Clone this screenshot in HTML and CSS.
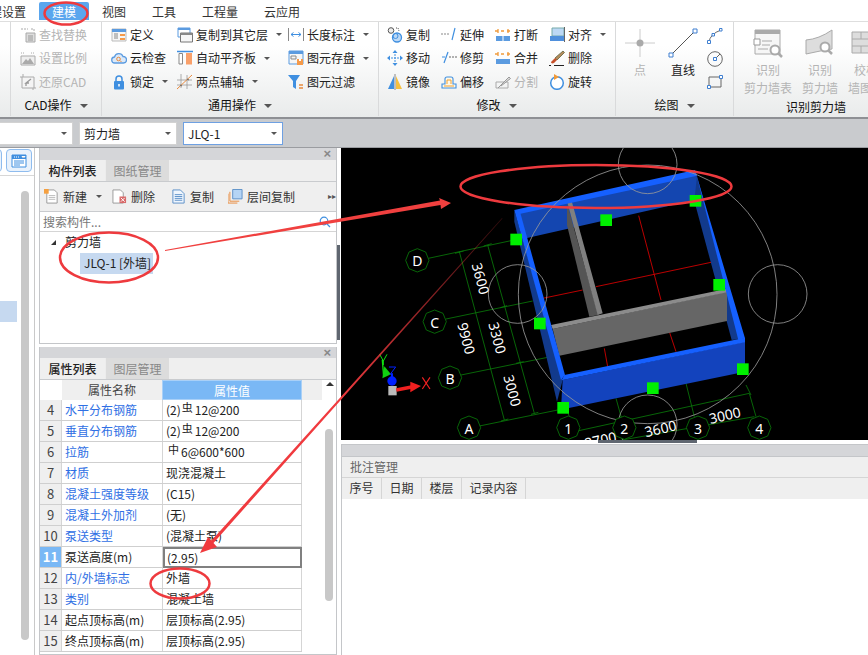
FILE: index.html
```html
<!DOCTYPE html>
<html lang="zh-CN">
<head>
<meta charset="utf-8">
<title>建模</title>
<link rel="stylesheet" href="styles.css">
</head>
<body>
<div class="app">
  <nav class="tabs">
    <span class="tab first">工程设置</span>
    <span class="tab active">建模</span>
    <span class="tab">视图</span>
    <span class="tab">工具</span>
    <span class="tab">工程量</span>
    <span class="tab">云应用</span>
  </nav>

  <section class="ribbon">
    <div class="group g-cad">
      <div class="grid">
        <div class="item off"><svg class="ic" viewBox="0 0 16 16"><path d="M1 2h7M11 2h3v2" fill="none" stroke="#aaa" stroke-dasharray="2 1"/><path d="M6 6h9v9H6z" fill="#ddd" stroke="#aaa"/><path d="M8 9h5M8 11h5M8 13h5" stroke="#999"/></svg>查找替换</div>
        <div class="item off"><svg class="ic" viewBox="0 0 16 16"><path d="M1 3h4M11 3h4" stroke="#aaa" stroke-dasharray="1 1"/><path d="M1 6h14v9H1z" fill="#eee" stroke="#aaa"/><path d="M2 14l4-5 2 2 2-3 4 6z" fill="#aaa"/></svg>设置比例</div>
        <div class="item off"><svg class="ic" viewBox="0 0 16 16"><path d="M2 3h12v11H2z" fill="#f4f4f4" stroke="#aaa"/><path d="M0 3h2M3 0v3M14 14h2M13 14v2" stroke="#aaa"/><path d="M11 5L6 9h3M6 9v3" fill="none" stroke="#999" stroke-width="1.3"/></svg>还原CAD</div>
      </div>
      <div class="label">CAD操作<i class="tri"></i></div>
    </div>

    <div class="group g-common">
      <div class="grid">
        <div class="item"><svg class="ic" viewBox="0 0 16 16"><path d="M1 2h14v12H1z" fill="#f6f6f6" stroke="#bbb"/><path d="M1 2h14v3H1z" fill="#5b9be0"/><path d="M3 7h4M3 9h4M3 11h4" stroke="#888"/><path d="M9 7h5v2H9zM9 11h5v2H9z" fill="#f59a4a"/></svg>定义</div>
        <div class="item"><svg class="ic" viewBox="0 0 16 16"><path d="M4 13a3 3 0 0 1-.5-6A4.500 4.500 0 0 1 12 6.500 3.200 3.200 0 0 1 12.500 13z" fill="#dbe9f8" stroke="#5b9be0" stroke-width="1.300"/><circle cx="7.500" cy="9" r="1.800" fill="none" stroke="#e98a3c"/><path d="M9 10.500l1.500 1.500" stroke="#e98a3c"/></svg>云检查</div>
        <div class="item"><svg class="ic" viewBox="0 0 16 16"><path d="M5 7V5a3 3 0 0 1 6 0v2" fill="none" stroke="#3f8fe0" stroke-width="1.500"/><rect x="3" y="7" width="10" height="8.500" rx="1" fill="#3f8fe0"/><path d="M8 10v2.500" stroke="#fff" stroke-width="1.500"/></svg>锁定<i class="tri sm"></i></div>

        <div class="item"><svg class="ic" viewBox="0 0 16 16"><path d="M1 1h12v9H1z" fill="#fff" stroke="#5b9be0"/><path d="M1 1h12v2H1z" fill="#5b9be0"/><path d="M3.500 6h12v9h-12z" fill="#f6f6f6" stroke="#777"/><path d="M3.500 6h12v2h-12z" fill="#888"/></svg>复制到其它层<i class="tri sm"></i></div>
        <div class="item"><svg class="ic" viewBox="0 0 16 16"><path d="M0 1.500h16" stroke="#3f8fe0" stroke-width="1.500"/><path d="M2 3.500h3.500V14H2z" fill="#fff" stroke="#888"/><path d="M9 3h6v11.500H9z" fill="#f9a06a"/></svg>自动平齐板<i class="tri sm"></i></div>
        <div class="item"><svg class="ic" viewBox="0 0 16 16"><path d="M4 0v14M10 1v14M0 6h15M0 11h15" stroke="#999" stroke-width=".8"/><path d="M0 15L15 1" stroke="#e98a3c"/><path d="M3 11l2 1M10 5l2 1" stroke="#666"/></svg>两点辅轴<i class="tri sm"></i></div>

        <div class="item"><svg class="ic" viewBox="0 0 16 16"><path d="M.5 1v13M15.500 1v13" stroke="#888"/><path d="M3 7.500h10M3 7.500l2.500-2M3 7.500l2.500 2M13 7.500l-2.500-2M13 7.500l-2.500 2" fill="none" stroke="#3f8fe0"/></svg>长度标注<i class="tri sm"></i></div>
        <div class="item"><svg class="ic" viewBox="0 0 16 16"><path d="M1 1h14v13H1z" fill="#f6f6f6" stroke="#5b9be0"/><path d="M1 1h14v3H1z" fill="#5b9be0"/><path d="M3 6h5v3H3z" fill="none" stroke="#888"/><path d="M9 9h6v6H9z" fill="#f59a4a"/><path d="M11 9h2v2h-2z" fill="#fff"/></svg>图元存盘<i class="tri sm"></i></div>
        <div class="item"><svg class="ic" viewBox="0 0 16 16"><path d="M0 1h12L8 7v8L5 13V7z" fill="#3f8fe0"/><path d="M11 11h4M11 14h4" stroke="#e98a3c" stroke-width="1.300"/></svg>图元过滤</div>
      </div>
      <div class="label">通用操作<i class="tri"></i></div>
    </div>

    <div class="group g-edit">
      <div class="grid">
        <div class="item"><svg class="ic" viewBox="0 0 16 16"><circle cx="4" cy="3.500" r="2.800" fill="#eee" stroke="#555"/><path d="M9 1h2l1 3" fill="none" stroke="#555" stroke-dasharray="1 1"/><circle cx="10" cy="10.500" r="4.500" fill="#bcd8f5" stroke="#3f8fe0" stroke-width="1.300"/><circle cx="8.500" cy="9" r="2.500" fill="none" stroke="#3f8fe0"/></svg>复制</div>
        <div class="item"><svg class="ic" viewBox="0 0 16 16"><path d="M0 7h9" stroke="#888" stroke-dasharray="2 1"/><path d="M11 13L14 1" stroke="#3f8fe0" stroke-width="1.200"/></svg>延伸</div>
        <div class="item"><svg class="ic" viewBox="0 0 16 16"><path d="M1 9h14v5H1z" fill="#5b9be0"/><path d="M8 9v5" stroke="#fff"/><path d="M0 4h3M6 4h3M12 4h3M3 2v4M13 2v4" stroke="#f09a3a" stroke-width="1.300"/></svg>打断</div>
        <div class="item"><svg class="ic" viewBox="0 0 16 16"><path d="M3 1h12v8H3z" fill="#bcd8f5" stroke="#7aa"/><path d="M1 9h14v5H1z" fill="#4f8fdc"/><path d="M15.500 0v15" stroke="#666"/></svg>对齐<i class="tri sm"></i></div>

        <div class="item"><svg class="ic" viewBox="0 0 16 16"><path d="M8 0l2.500 3h-5zM8 16l-2.500-3h5zM0 8l3-2.500v5zM16 8l-3-2.500v5z" fill="#3f8fe0"/><path d="M4 8h8M8 4v8" stroke="#3f8fe0" stroke-dasharray="2 1"/></svg>移动</div>
        <div class="item"><svg class="ic" viewBox="0 0 16 16"><path d="M1 7h3" stroke="#3f8fe0"/><path d="M3 13L7 2" stroke="#3f8fe0" stroke-width="1.200"/><path d="M8 7h8" stroke="#666" stroke-dasharray="2 1"/></svg>修剪</div>
        <div class="item"><svg class="ic" viewBox="0 0 16 16"><path d="M1 9h14v5H1z" fill="#5b9be0"/><path d="M0 4h3M6 4h3M12 4h3M3 2v4M13 2v4" stroke="#f09a3a" stroke-width="1.300"/></svg>合并</div>
        <div class="item"><svg class="ic" viewBox="0 0 16 16"><path d="M14 1l1.500 1.500L8 10 6 8z" fill="#b58a5a" stroke="#775"/><path d="M6 8l2 2-3 3c-2 1-3 0-3-1z" fill="#c7502a"/><path d="M0 15.500h2M5 15.500h10" stroke="#222"/></svg>删除</div>

        <div class="item"><svg class="ic" viewBox="0 0 16 16"><path d="M7 2v13H1z" fill="#3f8fe0"/><path d="M9 2v13h6z" fill="#f5c040"/><path d="M8 0v16" stroke="#888"/></svg>镜像</div>
        <div class="item"><svg class="ic" viewBox="0 0 16 16"><path d="M1 14h14v-4h-3V5a2 2 0 0 0-2-2H6a2 2 0 0 0-2 2v5H1z" fill="#fff8e8" stroke="#3f8fe0" stroke-width="1.100"/><path d="M3 12h10M6 10V6h4v4" fill="none" stroke="#f0a030"/></svg>偏移</div>
        <div class="item off"><svg class="ic" viewBox="0 0 16 16"><path d="M1 8h12v6H1z" fill="none" stroke="#aaa"/><path d="M3 14L14 3l1.500 1.500L6 12" fill="#ddd" stroke="#999"/></svg>分割</div>
        <div class="item"><svg class="ic" viewBox="0 0 16 16"><circle cx="8" cy="9" r="6.300" fill="#fff" stroke="#3f8fe0" stroke-width="1.500"/><path d="M5 0l5 3-5 3z" fill="#f09a3a"/></svg>旋转</div>
      </div>
      <div class="label">修改<i class="tri"></i></div>
    </div>

    <div class="group g-draw">
      <div class="draw-row">
        <div class="big off"><svg class="ic-big" viewBox="0 0 30 30"><path d="M15 1v28M0 15h30" stroke="#ccc"/><circle cx="15" cy="15" r="3.500" fill="#aaa"/></svg><span>点</span></div>
        <div class="big"><svg class="ic-big" viewBox="0 0 30 30"><path d="M3 27L27 3" stroke="#555"/><path d="M1 25h4v4H1zM25 1h4v4h-4z" fill="#fff" stroke="#3f7fd0"/></svg><span>直线</span></div>
        <div class="tools">
          <svg class="ic" viewBox="0 0 16 16"><path d="M2 14Q3 6 14 2" fill="none" stroke="#666"/><path d="M.5 12.500h3v3h-3zM5 5.500h2.500v2.500H5zM12.500 .5h2.500v2.500h-2.500z" fill="#fff" stroke="#3f7fd0"/></svg>
          <svg class="ic" viewBox="0 0 16 16"><circle cx="8" cy="8" r="7.300" fill="none" stroke="#666"/><path d="M8 8l5-5" stroke="#666"/><path d="M6.500 6.500h3v3h-3z" fill="#fff" stroke="#3f7fd0"/></svg>
          <svg class="ic" viewBox="0 0 16 16"><path d="M2 3h12v10H2z" fill="none" stroke="#666"/><path d="M.5 11.500h3v3h-3zM12.500 1.500h3v3h-3z" fill="#fff" stroke="#3f7fd0"/></svg>
        </div>
      </div>
      <div class="label">绘图<i class="tri"></i></div>
    </div>

    <div class="group g-rec">
      <div class="rec-row">
        <div class="big off"><svg class="ic-rec" viewBox="0 0 30 30"><path d="M2 1h25v24H2z" fill="#f6f6f6" stroke="#aaa"/><path d="M2 1h25v4H2z" fill="#aaa"/><path d="M1 10h6v6H1z" fill="#fff" stroke="#999"/><path d="M9 12h10M9 16h8M5 20h10" stroke="#aaa"/><circle cx="22" cy="21" r="4.500" fill="#fff" stroke="#aaa" stroke-width="2"/><path d="M25 24l4 4" stroke="#aaa" stroke-width="2.500"/></svg><span>识别</span><span>剪力墙表</span></div>
        <div class="big off"><svg class="ic-rec" viewBox="0 0 30 30"><path d="M1 11Q14 10 27 1v19Q14 22 1 25z" fill="#ddd" stroke="#aaa"/><circle cx="20" cy="18" r="4.500" fill="#fff" stroke="#aaa" stroke-width="2"/><path d="M23 21l4 4" stroke="#aaa" stroke-width="2.500"/></svg><span>识别</span><span>剪力墙</span></div>
        <div class="big off"><svg class="ic-rec" viewBox="0 0 30 30"><path d="M1 3h26v21H1z" fill="#ddd" stroke="#aaa"/><path d="M1 10h26M1 17h26M10 3v7M20 10v7M10 17v7" stroke="#aaa"/></svg><span>校核</span><span>墙图元</span></div>
      </div>
      <div class="label">识别剪力墙</div>
    </div>
  </section>

  <div class="toolbar">
    <div class="sel s1"><i class="tri sm"></i></div>
    <div class="sel s2"><span>剪力墙</span><i class="tri sm"></i></div>
    <div class="sel s3"><span>JLQ-1</span><i class="tri sm"></i></div>
  </div>

  <main class="main">
    <aside class="strip">
      <div class="strip-top">
        <span class="strip-btn"></span>
        <span class="strip-btn"><svg class="ic" viewBox="0 0 16 16"><path d="M1 2h14v12H1z" fill="#fff" stroke="#3f8fe0"/><path d="M1 2h14v4H1z" fill="#3f8fe0"/><path d="M3 4h1M5 4h1M7 4h1M11 3.500h3l-1.500 1.500z" stroke="#fff"/><path d="M3 8h10M3 10h10M3 12h6" stroke="#3f8fe0"/></svg></span>
      </div>
      <div class="strip-body">
        <div class="strip-sel"></div>
        <div class="strip-scroll"></div>
      </div>
    </aside>

    <div class="side">
      <section class="panel comp">
        <div class="panel-head tall">×</div>
        <div class="panel-tabs"><span class="ptab on">构件列表</span><span class="ptab">图纸管理</span></div>
        <div class="ptools">
          <span class="pt t-new"><svg class="ic15" viewBox="0 0 16 16"><path d="M3 1h8l3 3v11H3z" fill="#fff" stroke="#999"/><path d="M5 7h7M5 9h7M5 11h7" stroke="#bbb"/><path d="M0 0h5v5H0z" fill="#f5a040"/></svg>新建<i class="tri sm"></i></span>
          <span class="pt t-del"><svg class="ic15" viewBox="0 0 16 16"><path d="M1 1h8l3 3v11H1z" fill="#fff" stroke="#999"/><path d="M8 8h7v7H8z" fill="#d86a6a"/><path d="M9.500 9.500l4 4M13.500 9.500l-4 4" stroke="#fff"/></svg>删除</span>
          <span class="pt t-copy"><svg class="ic15" viewBox="0 0 16 16"><path d="M2 1h8l4 4v10H2z" fill="#eef5fd" stroke="#5b8fc8"/><path d="M4 6h8M4 8h8M4 10h8M4 12h8" stroke="#5b8fc8"/></svg>复制</span>
          <span class="pt t-floor"><svg class="ic15" viewBox="0 0 16 16"><path d="M0 5v10h10" fill="none" stroke="#ea8a3c"/><path d="M2 3v10h10" fill="none" stroke="#ea8a3c"/><path d="M5 .5h10v10H5z" fill="#b5d4f5" stroke="#5b8fc8"/></svg>层间复制</span>
          <span class="more">▸▸</span>
        </div>
        <div class="search"><span>搜索构件...</span><svg class="ic12" viewBox="0 0 12 12"><circle cx="5" cy="5" r="3.800" fill="none" stroke="#3f8fe0" stroke-width="1.200"/><path d="M8 8l3 3" stroke="#3f8fe0" stroke-width="1.200"/></svg></div>
        <div class="tree">
          <div class="node"><i class="corner"></i>剪力墙</div>
          <div class="leaf"><span>JLQ-1 [外墙]</span></div>
        </div>
      </section>

      <section class="panel attrs">
        <div class="panel-head">×</div>
        <div class="panel-tabs"><span class="ptab on">属性列表</span><span class="ptab">图层管理</span></div>
        <div class="tbl-wrap">
          <div class="thead"><span class="corner-cell"></span><span class="hname">属性名称</span><span class="hval">属性值</span></div>
          <div class="row"><span class="n">4</span><span class="k link">水平分布钢筋</span><span class="v">(2)<sup>虫</sup>12@200</span></div>
          <div class="row"><span class="n">5</span><span class="k link">垂直分布钢筋</span><span class="v">(2)<sup>虫</sup>12@200</span></div>
          <div class="row"><span class="n">6</span><span class="k link">拉筋</span><span class="v"><sup class="pad">中</sup>6@600*600</span></div>
          <div class="row"><span class="n">7</span><span class="k link">材质</span><span class="v">现浇混凝土</span></div>
          <div class="row"><span class="n">8</span><span class="k link">混凝土强度等级</span><span class="v">(C15)</span></div>
          <div class="row"><span class="n">9</span><span class="k link">混凝土外加剂</span><span class="v">(无)</span></div>
          <div class="row"><span class="n">10</span><span class="k link">泵送类型</span><span class="v">(混凝土泵)</span></div>
          <div class="row cur"><span class="n">11</span><span class="k">泵送高度(m)</span><span class="v">(2.95)</span></div>
          <div class="row"><span class="n">12</span><span class="k link">内/外墙标志</span><span class="v">外墙</span></div>
          <div class="row"><span class="n">13</span><span class="k link">类别</span><span class="v">混凝土墙</span></div>
          <div class="row"><span class="n">14</span><span class="k">起点顶标高(m)</span><span class="v">层顶标高(2.95)</span></div>
          <div class="row"><span class="n">15</span><span class="k">终点顶标高(m)</span><span class="v">层顶标高(2.95)</span></div>
          <div class="scroll-up"></div>
          <div class="scroll-thumb"></div>
        </div>
      </section>
    </div>

    <div class="splitter"><i></i></div>

    <div class="work">
      <div class="canvas">
        <svg class="cad" viewBox="0 9 1584 876">
          <g stroke="#0a7a0a" stroke-width="2.500" fill="none">
            <path d="M262 340L510 287M315 522L575 468M360 690L620 637M415 843L650 795"/>
            <path d="M355 320L490 825M440 300L580 805M342 325L368 318M428 303L452 296M478 488L498 482M525 655L548 650M480 828L502 822M570 808L592 802"/>
            <path d="M700 860L1225 745M815 890L1240 815M1225 745L1245 815M825 760L850 850M1035 715L1060 815M1215 720L1230 750M680 800L700 860"/>
          </g>
          <polygon points="520,195 520,230 648,770 665,705" fill="#123a8c"/>
          <polygon points="535,200 1065,85 1085,160 555,280" fill="#1446b0"/>
          <polygon points="1068,92 1195,582 1172,585 1060,168" fill="#123a8c"/>
          <g stroke="#e00000" stroke-width="2.500" fill="none">
            <path d="M893 212L960 465M985 560L1005 620M790 610L800 665M605 460L725 435M765 425L1110 352"/>
          </g>
          <polygon points="678,175 678,240 745,515 772,510" fill="#555"/>
          <polygon points="678,168 692,168 785,505 770,510" fill="#808080"/>
          <polygon points="635,552 1158,440 1158,528 655,632" fill="#666"/>
          <polygon points="630,540 1155,432 1158,442 635,552" fill="#8c8c8c"/>
          <polygon points="520,195 1062,75 1068,92 535,207" fill="#1560ff"/>
          <polygon points="1062,75 1212,580 1192,585 1068,95" fill="#1560ff"/>
          <polygon points="520,195 537,200 672,690 660,705" fill="#1560ff"/>
          <polygon points="665,705 1212,590 1212,680 680,790 660,790" fill="#1343bd"/>
          <polygon points="670,690 1212,578 1212,592 662,706" fill="#1560ff"/>
          <g stroke="#999" stroke-width="2.500" fill="none">
            <circle cx="920" cy="448" r="388"/>
            <circle cx="920" cy="58" r="88"/>
            <circle cx="530" cy="447" r="88"/>
            <circle cx="1310" cy="447" r="88"/>
            <circle cx="920" cy="838" r="88"/>
          </g>
          <g fill="#00f000">
            <rect x="508" y="266" width="35" height="35"/>
            <rect x="778" y="208" width="35" height="35"/>
            <rect x="1046" y="150" width="35" height="35"/>
            <rect x="1117" y="402" width="35" height="35"/>
            <rect x="579" y="518" width="35" height="35"/>
            <rect x="1188" y="655" width="35" height="35"/>
            <rect x="918" y="712" width="35" height="35"/>
            <rect x="649" y="771" width="35" height="35"/>
          </g>
          <g fill="#000" stroke="#0a7a0a" stroke-width="2.500">
            <polygon points="229,311 254,321 264,346 254,371 229,381 204,371 194,346 204,321"/>
            <polygon points="281,495 306,505 316,530 306,555 281,565 256,555 246,530 256,505"/>
            <polygon points="327,663 352,673 362,698 352,723 327,733 302,723 292,698 302,673"/>
            <polygon points="384,813 409,823 419,848 409,873 384,883 359,873 349,848 359,823"/>
            <polygon points="682,813 707,823 717,848 707,873 682,883 657,873 647,848 657,823"/>
            <polygon points="850,813 875,823 885,848 875,873 850,883 825,873 815,848 825,823"/>
            <polygon points="1071,813 1096,823 1106,848 1096,873 1071,883 1046,873 1036,848 1046,823"/>
            <polygon points="1255,813 1280,823 1290,848 1280,873 1255,883 1230,873 1220,848 1230,823"/>
          </g>
          <g class="cad-t">
            <text x="229" y="364">D</text><text x="281" y="548">C</text><text x="327" y="716">B</text><text x="384" y="866">A</text>
            <text x="682" y="866">1</text><text x="850" y="866">2</text><text x="1071" y="866">3</text><text x="1255" y="866">4</text>
            <text transform="translate(404 405) rotate(75)">3600</text>
            <text transform="translate(454 583) rotate(75)">3300</text>
            <text transform="translate(361 584) rotate(75)">9900</text>
            <text transform="translate(499 741) rotate(75)">3000</text>
            <text transform="translate(1155 826) rotate(-13)">3000</text>
            <text transform="translate(962 866) rotate(-13)">3600</text>
            <text transform="translate(782 900) rotate(-13)">2700</text>
          </g>
          <rect x="142" y="723" width="25" height="28" fill="#bbb"/>
          <path d="M166 735L212 726" stroke="#f02020" stroke-width="10"/>
          <path d="M208 710L240 723 208 742z" fill="#f02020"/>
          <path d="M128 695L124 645" stroke="#10e010" stroke-width="4"/>
          <path d="M124 700L150 688 130 664z" fill="#10d010"/>
          <circle cx="153" cy="708" r="14" fill="#0020ff"/>
          <path d="M153 700V685" stroke="#0020ff" stroke-width="6"/>
          <path d="M116 628L127 648 138 628M127 648V660" fill="none" stroke="#10e010" stroke-width="3"/>
          <path d="M144 666H164L146 690" fill="none" stroke="#0020ff" stroke-width="3"/>
          <path d="M244 697L267 732M267 697L244 732" stroke="#f02020" stroke-width="3.500"/>
        </svg>
      </div>
      <div class="grip"><i></i></div>
      <section class="note">
        <div class="note-head"></div>
        <div class="note-title">批注管理</div>
        <div class="note-cols"><span>序号</span><span>日期</span><span>楼层</span><span class="long">记录内容</span></div>
      </section>
    </div>
  </main>

  <svg class="marks" viewBox="0 0 868 655">
    <defs>
      <linearGradient id="fade" gradientUnits="userSpaceOnUse" x1="502" y1="218" x2="340" y2="400">
        <stop offset="0" stop-color="#f03a3e" stop-opacity=".2"/>
        <stop offset="1" stop-color="#f03a3e"/>
      </linearGradient>
    </defs>
    <g fill="none" stroke="#ee3a3e" stroke-width="2.500">
      <ellipse cx="66" cy="13.500" rx="21.500" ry="11"/>
      <ellipse cx="596" cy="186.500" rx="135.500" ry="21.500"/>
      <ellipse cx="109" cy="257.500" rx="49" ry="25"/>
      <ellipse cx="180" cy="583.500" rx="29.500" ry="15"/>
    </g>
    <polygon points="165,250 440,200.500 439,198 451,203 441,209 440.500,205 165,251" fill="#f0403f"/>
    <polygon points="502,218 211.500,540.500 208,537 200,553 217,547 213.500,543 502.500,218.500" fill="url(#fade)"/>
  </svg>
</div>
</body>
</html>
```
FILE: styles.css
```css
* { box-sizing: border-box; }
html, body { margin: 0; padding: 0; background: #fff; }
body { font: 12px/16px "Noto Sans CJK SC", "Noto Sans", sans-serif; color: #222; }
i { font-style: normal; }

.app { position: relative; width: 868px; height: 655px; overflow: hidden; display: flex; flex-direction: column; }

.tabs { flex: none; height: 21px; display: flex; align-items: flex-start; padding-top: 2px; }
.tab { padding: 0 13px; height: 18px; line-height: 19px; color: #333; white-space: nowrap; }
.tab.first { margin-left: -35px; }
.tab.active { background: #5aa6ee; color: #fff; border-radius: 2px 2px 0 0; }

.ribbon { flex: none; height: 98px; display: flex; padding-left: 10px; overflow: hidden;
  border-top: 1px solid #dedede; border-bottom: 2px solid #8e9094;
  background: linear-gradient(#fff 25%, #e9ebeb); }
.group { flex: none; margin: 0 0 1px; padding-top: 1px; border-left: 1px solid #d9dadb; display: flex; flex-direction: column; }
.g-cad { width: 91px; padding-left: 9px; }
.g-common { width: 277px; padding-left: 9px; }
.g-edit { width: 237px; padding-left: 8px; }
.g-draw { width: 118px; padding-left: 9px; }
.g-rec { width: 164px; padding-left: 10px; }
.grid { display: grid; grid-auto-flow: column; grid-template-rows: repeat(3, 23.500px); }
.g-common .grid { grid-template-columns: 66px 111px auto; }
.g-edit .grid { grid-auto-flow: row; grid-template-columns: repeat(4, 54px); }
.item { display: flex; align-items: center; gap: 3px; white-space: nowrap; color: #222; }
.off, .off span { color: #b4b4b4; }
.ic { flex: none; width: 16px; height: 16px; display: block; }
.ic15 { flex: none; width: 15px; height: 15px; display: block; }
.ic12 { flex: none; width: 12px; height: 12px; display: block; }
.label { margin-top: auto; height: 21px; line-height: 20px; text-align: center; color: #111; margin-left: -9px; white-space: nowrap; }
.tri { display: inline-block; width: 0; height: 0; margin-left: 8px; vertical-align: 2px;
  border-left: 4px solid transparent; border-right: 4px solid transparent; border-top: 4px solid #555; }
.tri.sm { margin-left: 5px; border-left-width: 3.500px; border-right-width: 3.500px; border-top-width: 3.500px; vertical-align: middle; }

.draw-row { display: flex; align-items: flex-start; padding-top: 5px; }
.big { display: flex; flex-direction: column; align-items: center; white-space: nowrap; line-height: 18px; }
.big span { display: block; }
.ic-big { width: 30px; height: 30px; margin-bottom: 3px; display: block; }
.draw-row .big { width: 30px; margin-right: 13px; }
.draw-row .big:nth-child(2) { margin-right: 9px; }
.tools { display: flex; flex-direction: column; gap: 7px; }
.rec-row { display: flex; gap: 10px; padding-top: 6px; align-items: flex-start; }
.ic-rec { width: 30px; height: 30px; margin-bottom: 2px; display: block; }

.toolbar { flex: none; height: 28px; background: #c9cbce; display: flex; gap: 6px; padding-top: 3px; }
.sel { height: 23px; background: #fff; border: 1px solid #d2d2d2; display: flex; align-items: center; justify-content: space-between; padding: 0 5px 0 4px; }
.s1 { width: 73px; border-left: 0; justify-content: flex-end; }
.s2 { width: 98px; }
.s3 { width: 100px; border-color: #6ea0e2; }

.main { flex: 1; min-height: 0; display: flex; background: #fff; border-top: 1px solid #9a9ca0; }
.strip { flex: none; width: 35px; border-right: 1px solid #c9c9c9; display: flex; flex-direction: column; }
.strip-top { height: 28px; padding-top: 1px; border-bottom: 1px solid #d7d7d7; display: flex; gap: 4px; margin-left: -24px; }
.strip-btn { flex: none; width: 26px; height: 23px; border: 1px solid #8fbcee; border-radius: 4px; background: #e9f2fc; display: flex; align-items: center; justify-content: center; }
.strip-body { flex: 1; position: relative; display: flex; flex-direction: column; padding-top: 15px; }
.strip-scroll { position: absolute; left: 21px; top: 15px; width: 8px; height: 449px; border-radius: 4px; background: #c8c8c8; }
.strip-sel { position: absolute; left: 0; top: 125px; width: 17px; height: 21px; background: #c6d9f0; }

.side { flex: none; width: 298px; margin-left: 4px; display: flex; flex-direction: column; gap: 3px; }
.panel { border: 1px solid #c4c6c9; border-top: 0; background: #fff; display: flex; flex-direction: column; }
.comp { flex: none; height: 196px; }
.attrs { flex: 1; min-height: 0; }
.panel-head { flex: none; height: 11px; background: #d5d6d9; color: #888; font: bold 13px/11px "Liberation Sans", sans-serif; text-align: right; padding-right: 5px; }
.panel-head.tall { height: 12px; }
.panel-tabs { flex: none; height: 22px; background: #efefef; display: flex; border-bottom: 1px solid #c9cbce; }
.ptab { width: 64px; line-height: 22px; text-align: center; color: #888; background: #dcdcdc; border-left: 1px solid #ececec; }
.ptab.on { color: #222; font-weight: 500; background: #efefef; width: 65px; border-left: 0; }
.ptools { flex: none; height: 30px; background: #efefef; border-bottom: 1px solid #c9cbce; display: flex; align-items: center; padding-left: 4px; color: #333; position: relative; }
.pt { display: flex; align-items: center; gap: 4px; white-space: nowrap; }
.t-new { width: 68px; }
.t-del { width: 59px; }
.t-copy { width: 57px; }
.more { position: absolute; right: 0; top: 6px; font-size: 8px; color: #555; }
.search { flex: none; height: 20px; display: flex; align-items: center; justify-content: space-between; border-bottom: 1px solid #d5d5d5; color: #777; padding: 0 5px 0 3px; }
.tree { flex: 1; padding: 0 0 0 11px; }
.node { display: flex; align-items: center; height: 20px; gap: 9px; color: #222; }
.corner { width: 0; height: 0; border-left: 5px solid transparent; border-bottom: 5px solid #333; }
.leaf { padding-left: 29px; height: 21px; margin-top: 1px; }
.leaf span { display: inline-block; height: 21px; line-height: 20px; padding: 0 2px 0 4px; background: #c6d9f0; color: #222; white-space: nowrap; }

.tbl-wrap { flex: 1; position: relative; overflow: hidden; }
.thead { display: flex; height: 20px; width: 282px; line-height: 19px; text-align: center; background: #efefef; }
.corner-cell { width: 22px; background: #fff; }
.hname { width: 100px; color: #444; }
.hval { width: 140px; background: #7ab8f5; color: #fff; border: 1px solid #a9d0f7; }
.row { display: flex; height: 21px; width: 262px; line-height: 20px; border-bottom: 1px solid #cfcfcf; }
.n { flex: none; width: 22px; background: #efefef; text-align: center; font-size: 13px; color: #444; border-right: 1px solid #d5d5d5; }
.k { flex: none; width: 101px; padding-left: 3px; color: #222; border-right: 1px solid #d5d5d5; white-space: nowrap; overflow: hidden; }
.k.link { color: #2f6fe4; }
.v { flex: 1; padding-left: 3px; color: #222; border-right: 1px solid #d5d5d5; white-space: nowrap; }
.v sup { font-size: 11px; line-height: 0; vertical-align: 3px; padding: 0 2px 0 1px; }
.v sup.pad { padding-left: 2px; }
.cur .n { background: #7ab8f5; color: #fff; font-weight: 700; }
.cur .v { border: 2px solid #808080; line-height: 17px; padding-left: 2px; height: 21px; }
.scroll-up { position: absolute; left: 286px; top: 2px; width: 0; height: 0; border-left: 4px solid transparent; border-right: 4px solid transparent; border-bottom: 4px solid #333; }
.scroll-thumb { position: absolute; left: 285px; top: 49px; width: 8px; height: 172px; border-radius: 4px; background: #c8c8c8; }

.splitter { flex: none; width: 4px; position: relative; }
.splitter i { position: absolute; left: 0; top: 97px; width: 3px; height: 95px; background: #5f6670; }
.work { flex: 1; min-width: 0; display: flex; flex-direction: column; }
.canvas { flex: none; height: 292px; background: #000; }
.cad { display: block; width: 528px; height: 292px; }
.cad-t text { fill: #fff; font: 42px "Noto Sans", sans-serif; text-anchor: middle; }
.grip { flex: none; height: 4px; background: #fff; position: relative; }
.grip i { position: absolute; left: 257px; top: 0; width: 99px; height: 3px; background: #5f6670; }
.note { flex: 1; border-top: 1px solid #c4c6c9; border-left: 1px solid #c4c6c9; display: flex; flex-direction: column; }
.note-head { flex: none; height: 12px; background: #d5d6d9; border-bottom: 1px solid #c4c6c9; }
.note-title { flex: none; height: 21px; line-height: 20px; padding-left: 8px; background: #efefef; color: #666; border-bottom: 1px solid #d5d5d5; }
.note-cols { flex: none; height: 21px; background: #efefef; display: flex; }
.note-cols span { width: 40px; text-align: center; line-height: 20px; color: #333; border-right: 1px solid #d5d5d5; }
.note-cols .long { width: 64px; }

.marks { position: absolute; left: 0; top: 0; width: 868px; height: 655px; pointer-events: none; }
```
